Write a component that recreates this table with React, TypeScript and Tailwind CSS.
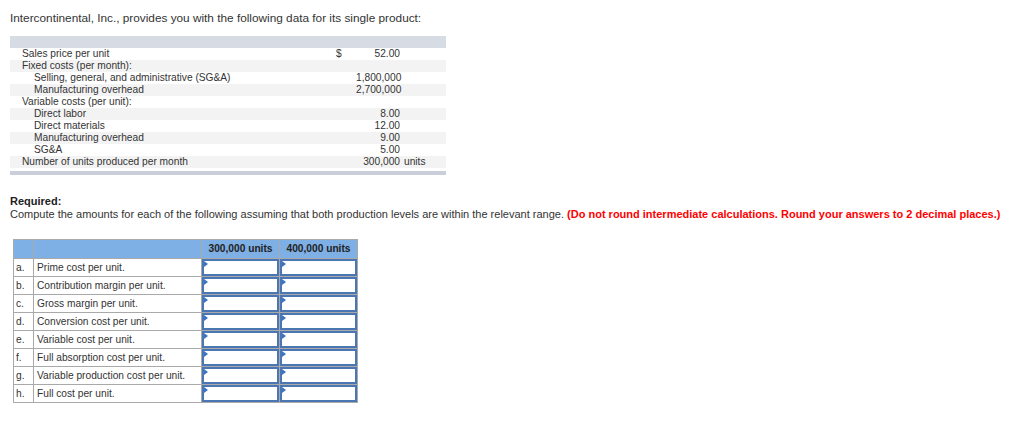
const rows: { label: string; indent?: boolean; dollar?: boolean; value?: string; unit?: string }[] = [
  { label: 'Sales price per unit', dollar: true, value: '52.00' },
  { label: 'Fixed costs (per month):' },
  { label: 'Selling, general, and administrative (SG&A)', indent: true, value: '1,800,000' },
  { label: 'Manufacturing overhead', indent: true, value: '2,700,000' },
  { label: 'Variable costs (per unit):' },
  { label: 'Direct labor', indent: true, value: '8.00' },
  { label: 'Direct materials', indent: true, value: '12.00' },
  { label: 'Manufacturing overhead', indent: true, value: '9.00' },
  { label: 'SG&A', indent: true, value: '5.00' },
  { label: 'Number of units produced per month', value: '300,000', unit: 'units' },
];

const questions = [
  ['a.', 'Prime cost per unit.'],
  ['b.', 'Contribution margin per unit.'],
  ['c.', 'Gross margin per unit.'],
  ['d.', 'Conversion cost per unit.'],
  ['e.', 'Variable cost per unit.'],
  ['f.', 'Full absorption cost per unit.'],
  ['g.', 'Variable production cost per unit.'],
  ['h.', 'Full cost per unit.'],
];

function AnswerCell() {
  return (
    <td className="p-0 h-[18px] border border-[#a9a9a9]">
      <div className="relative h-[17px] border-2 border-[#4a77b4] bg-white">
        <span className="absolute left-0 top-0 w-0 h-0 border-t-[3px] border-b-[3px] border-l-[4px] border-t-transparent border-b-transparent border-l-[#3b74c4]" />
      </div>
    </td>
  );
}

export default function App() {
  return (
    <div className="w-[1024px] h-[424px] bg-white text-[#333] font-['Liberation_Sans',Arial,sans-serif] pt-[11px]">
      <p className="ml-[10px] text-[11.8px] leading-[14px] whitespace-nowrap">
        Intercontinental, Inc., provides you with the following data for its single product:
      </p>

      <div className="ml-[10px] w-[436px] mt-[11px] text-[10.2px]">
        <div className="h-[12px] bg-[#d7dbe4]" />
        {rows.map((r, i) => (
          <div
            key={i}
            className={`grid grid-cols-[326px_20px_44px_46px] h-[12px] leading-[12px] ${i % 2 === 1 ? 'bg-[#f3f3f3]' : 'bg-white'}`}
          >
            <span className={r.indent ? 'pl-[24px] whitespace-nowrap' : 'pl-[12px] whitespace-nowrap'}>{r.label}</span>
            <span>{r.dollar ? '$' : ''}</span>
            <span className="text-right">{r.value ?? ''}</span>
            <span className="pl-[4px]">{r.unit ?? ''}</span>
          </div>
        ))}
        <div className="h-[4px] mt-[3px] bg-[#c9ced8]" />
      </div>

      <div className="ml-[10px] mt-[20px] text-[11px] leading-[13px] whitespace-nowrap">
        <p className="font-bold text-[#222]">Required:</p>
        <p>
          Compute the amounts for each of the following assuming that both production levels are within the relevant range.{' '}
          <span className="font-bold text-[#ff0000]">
            (Do not round intermediate calculations. Round your answers to 2 decimal places.)
          </span>
        </p>
      </div>

      <table className="ml-[13px] mt-[18px] border-collapse text-[10.2px] leading-[14px]">
        <thead>
          <tr className="h-[19px] bg-[#7eafe5]">
            <th className="w-[20px] border border-[#a9a9a9]" />
            <th className="w-[168px] border border-[#a9a9a9]" />
            <th className="w-[78px] border border-[#a9a9a9] font-bold text-[#222] text-center">300,000 units</th>
            <th className="w-[78px] border border-[#a9a9a9] font-bold text-[#222] text-center">400,000 units</th>
          </tr>
        </thead>
        <tbody>
          {questions.map(([k, q]) => (
            <tr key={k} className="h-[18px]">
              <td className="border border-[#a9a9a9] pl-[2px] align-middle">{k}</td>
              <td className="border border-[#a9a9a9] pl-[3px] align-middle whitespace-nowrap">{q}</td>
              <AnswerCell />
              <AnswerCell />
            </tr>
          ))}
        </tbody>
      </table>
    </div>
  );
}
